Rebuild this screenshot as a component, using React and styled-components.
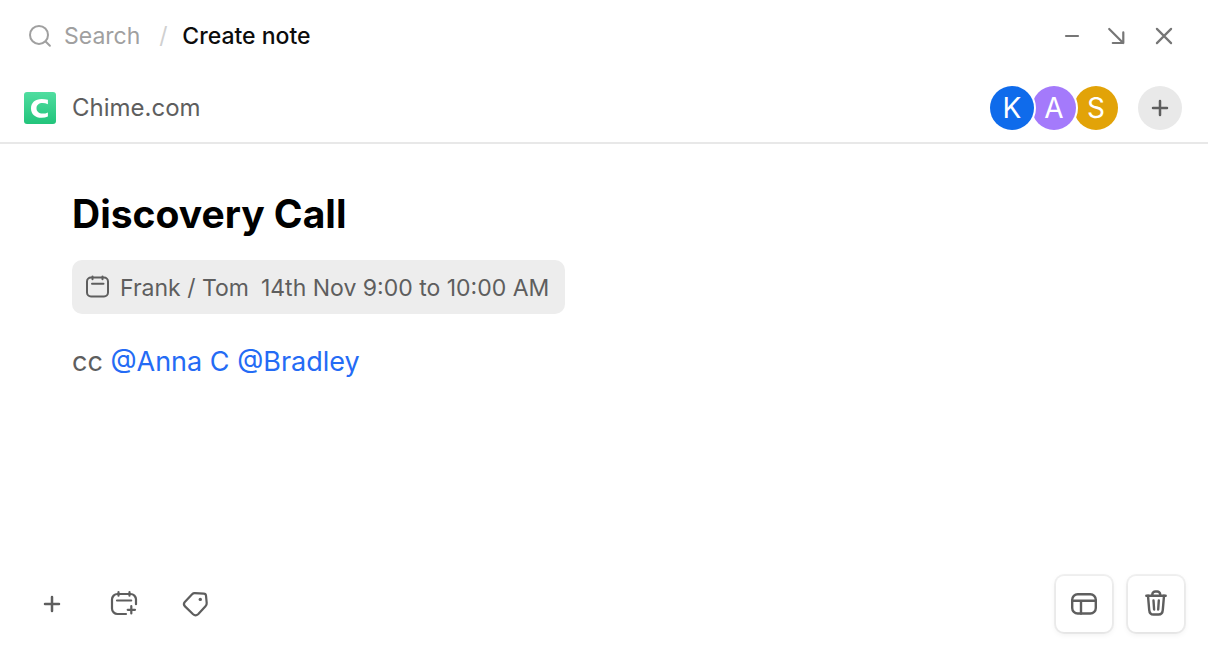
import React from "react";
import styled, { createGlobalStyle } from "styled-components";

const GlobalStyle = createGlobalStyle`
  *, *::before, *::after { box-sizing: border-box; }
  body {
    margin: 0;
    background: #fff;
    color: #5e5e5e;
    font-family: Inter, "Liberation Sans", sans-serif;
    font-size: 23px;
    line-height: 32px;
  }
`;

const Window = styled.div`
  display: flex;
  flex-direction: column;
  min-height: 100vh;
`;

const TopBar = styled.header`
  display: flex;
  align-items: center;
  justify-content: space-between;
  padding: 20px 28px 20px 24px;
`;

const Breadcrumb = styled.nav`
  display: flex;
  align-items: center;
`;

const SearchLink = styled.a`
  display: flex;
  align-items: center;
  gap: 8px;
  color: #a0a0a0;
  text-decoration: none;
`;

const Separator = styled.span`
  width: 42px;
  padding-left: 4px;
  color: #d0d0d0;
  text-align: center;
`;

const Current = styled.span`
  color: #0c0c0c;
  font-weight: 500;
`;

const WindowControls = styled.div`
  display: flex;
  gap: 14px;
`;

const IconButton = styled.button`
  display: flex;
  align-items: center;
  justify-content: center;
  width: 32px;
  height: 32px;
  padding: 0;
  border: 0;
  background: none;
  color: ${({ $color }) => $color || "#5e5e5e"};
  cursor: pointer;
`;

const CompanyBar = styled.div`
  display: flex;
  align-items: center;
  justify-content: space-between;
  padding: 14px 26px 12px 24px;
  border-bottom: 2px solid #e8e8e8;
`;

const Company = styled.div`
  display: flex;
  align-items: center;
  gap: 16px;
  font-size: 24px;
`;

const People = styled.div`
  display: flex;
  align-items: center;
  gap: 20px;
`;

const AvatarStack = styled.div`
  display: flex;
  isolation: isolate;
`;

const Avatar = styled.span`
  position: relative;
  z-index: ${({ $level }) => $level};
  width: 44px;
  margin-left: ${({ $first }) => ($first ? "0" : "-2px")};
  border-radius: 50%;
  box-shadow: 0 0 0 2px #fff;
  background: ${({ $fill }) => $fill};
  color: #fff;
  font-size: 28px;
  line-height: 44px;
  text-align: center;
`;

const AddPersonButton = styled(IconButton)`
  width: 44px;
  height: 44px;
  border-radius: 50%;
  background: #e9e9e9;
`;

const Note = styled.main`
  display: flex;
  flex: 1;
  flex-direction: column;
  align-items: flex-start;
  padding: 46px 72px 24px;
`;

const Title = styled.h1`
  margin: 0 0 22px;
  color: #000;
  font-size: 39px;
  font-weight: 700;
  line-height: 48px;
`;

const EventChip = styled.button`
  display: flex;
  align-items: center;
  gap: 8px;
  margin: 0 0 28px;
  padding: 12px 16px 10px 12px;
  border: 0;
  border-radius: 10px;
  background: #ededed;
  color: #5e5e5e;
  font: inherit;
  cursor: pointer;
`;

const EventTime = styled.span`
  margin-left: 4px;
`;

const Paragraph = styled.p`
  margin: 0;
  font-size: 27px;
  line-height: 40px;
`;

const Mention = styled.a`
  color: #246bf5;
  text-decoration: none;
`;

const Footer = styled.footer`
  display: flex;
  align-items: center;
  justify-content: space-between;
  padding: 0 24px 20px 36px;
`;

const Tools = styled.div`
  display: flex;
  gap: ${({ $gap }) => $gap};
`;

const CardButton = styled(IconButton)`
  width: 56px;
  height: 56px;
  border-radius: 8px;
  background: #fff;
  box-shadow: 0 0 0 2px rgba(0, 0, 0, 0.05), 0 2px 6px rgba(0, 0, 0, 0.08);
`;

function Icon({ children, width = 2.2 }) {
  return (
    <svg
      width="32"
      height="32"
      viewBox="0 0 32 32"
      fill="none"
      stroke="currentColor"
      strokeWidth={width}
      strokeLinecap="round"
      strokeLinejoin="round"
      aria-hidden="true"
    >
      {children}
    </svg>
  );
}

function PlusIcon() {
  return (
    <Icon width={2.5}>
      <path d="M9 16h14M16 9v14" />
    </Icon>
  );
}

function CompanyLogo() {
  return (
    <svg width="32" height="32" viewBox="0 0 32 32" aria-hidden="true">
      <defs>
        <linearGradient id="logoFill" x1="0" y1="0" x2="0" y2="1">
          <stop offset="0" stopColor="#50dda0" />
          <stop offset="1" stopColor="#22c47b" />
        </linearGradient>
      </defs>
      <rect width="32" height="32" rx="3" fill="url(#logoFill)" />
      <path
        d="M23.900 7.700v4.600c-1.800-.8-3.500-1.200-5.200-1.200-3.900 0-6.200 2-6.200 5.200s2.300 5.300 6.200 5.300c1.900 0 3.600-.4 5.200-1.200v4.100c-1.900.8-4 1.200-6.300 1.200-6.500 0-10.600-3.600-10.600-9.300s4.100-9.400 10.600-9.400c2.200 0 4.400.2 6.300.7z"
        fill="#fff"
      />
    </svg>
  );
}

const people = [
  { initial: "K", fill: "#0f6beb" },
  { initial: "A", fill: "#a47afb" },
  { initial: "S", fill: "#e2a308" },
];

export default function App() {
  return (
    <>
      <GlobalStyle />
      <Window>
        <TopBar>
          <Breadcrumb aria-label="Breadcrumb">
            <SearchLink href="#search">
              <Icon width={2}>
                <circle cx="15" cy="14.900" r="9" />
                <path d="M21.600 21.500l4.300 4.300" />
              </Icon>
              Search
            </SearchLink>
            <Separator>/</Separator>
            <Current aria-current="page">Create note</Current>
          </Breadcrumb>
          <WindowControls>
            <IconButton type="button" aria-label="Minimize" $color="#767676">
              <Icon><path d="M10 16h12" /></Icon>
            </IconButton>
            <IconButton type="button" aria-label="Dock" $color="#767676">
              <Icon><path d="M7.200 9l14 14M21.300 12.400v10.600h-10.500" /></Icon>
            </IconButton>
            <IconButton type="button" aria-label="Close" $color="#767676">
              <Icon><path d="M8.900 8.900l14.200 14.200M23.100 8.900l-14.200 14.200" /></Icon>
            </IconButton>
          </WindowControls>
        </TopBar>

        <CompanyBar>
          <Company>
            <CompanyLogo />
            <span>Chime.com</span>
          </Company>
          <People>
            <AvatarStack>
              {people.map(({ initial, fill }, index) => (
                <Avatar key={initial} $fill={fill} $first={index === 0} $level={people.length - index}>
                  {initial}
                </Avatar>
              ))}
            </AvatarStack>
            <AddPersonButton type="button" aria-label="Add person">
              <PlusIcon />
            </AddPersonButton>
          </People>
        </CompanyBar>

        <Note>
          <Title>Discovery Call</Title>
          <EventChip type="button">
            <svg width="28" height="28" viewBox="0 0 28 28" fill="none" stroke="currentColor" strokeWidth="2" strokeLinecap="round" aria-hidden="true">
              <rect x="3" y="3.500" width="21" height="19" rx="4" />
              <path d="M8.500 2.500v2.700M18.500 2.500v2.700M8 9.700h11.500" />
            </svg>
            <span>Frank / Tom</span>
            <EventTime>14th Nov 9:00 to 10:00 AM</EventTime>
          </EventChip>
          <Paragraph>
            cc <Mention href="#anna">@Anna C</Mention> <Mention href="#bradley">@Bradley</Mention>
          </Paragraph>
        </Note>

        <Footer>
          <Tools $gap="40px">
            <IconButton type="button" aria-label="Insert">
              <PlusIcon />
            </IconButton>
            <IconButton type="button" aria-label="Add event">
              <Icon>
                <path d="M18 26h-8.500a5.500 5.500 0 0 1-5.500-5.500v-9a5.500 5.500 0 0 1 5.500-5.500h13a5.500 5.500 0 0 1 5.500 5.500v4.700" />
                <path d="M10.500 4.200v3.500M21.500 4.200v3.500M9 12.500h14.200M19.700 21.800h7.300M23.300 18.200v7.300" />
              </Icon>
            </IconButton>
            <IconButton type="button" aria-label="Add tag">
              <Icon>
                <path d="M14.800 5.100L23.800 5.600Q25.800 5.700 26 7.600L26.700 14.800Q26.900 16.800 25.500 18.200L18.100 26.300Q15.600 28.600 13.100 26.300L5 18.400Q2.900 16.200 4.800 13.900L12.100 6.200Q13.300 5 14.800 5.100Z" />
                <circle cx="20.300" cy="11.400" r="1.700" fill="currentColor" stroke="none" />
              </Icon>
            </IconButton>
          </Tools>
          <Tools $gap="16px">
            <CardButton type="button" aria-label="Change layout">
              <Icon width={2.4}>
                <rect x="4.200" y="6.300" width="23.600" height="19.200" rx="5.500" />
                <path d="M4.200 12.700h23.600M13 12.700v12.800" />
              </Icon>
            </CardButton>
            <CardButton type="button" aria-label="Delete note">
              <Icon width={2.400}>
                <path d="M6.300 7.800h19.400M12.300 7.800v-1.300a3 3 0 0 1 3-3h1.900a3 3 0 0 1 3 3v1.300" />
                <path d="M8 7.800l1.200 14c.2 3 1.600 4.700 4.300 4.700h5c2.700 0 4.100-1.700 4.300-4.700l1.200-14M13.500 12.500l.6 9M18.800 12.500l-.6 9" />
              </Icon>
            </CardButton>
          </Tools>
        </Footer>
      </Window>
    </>
  );
}
